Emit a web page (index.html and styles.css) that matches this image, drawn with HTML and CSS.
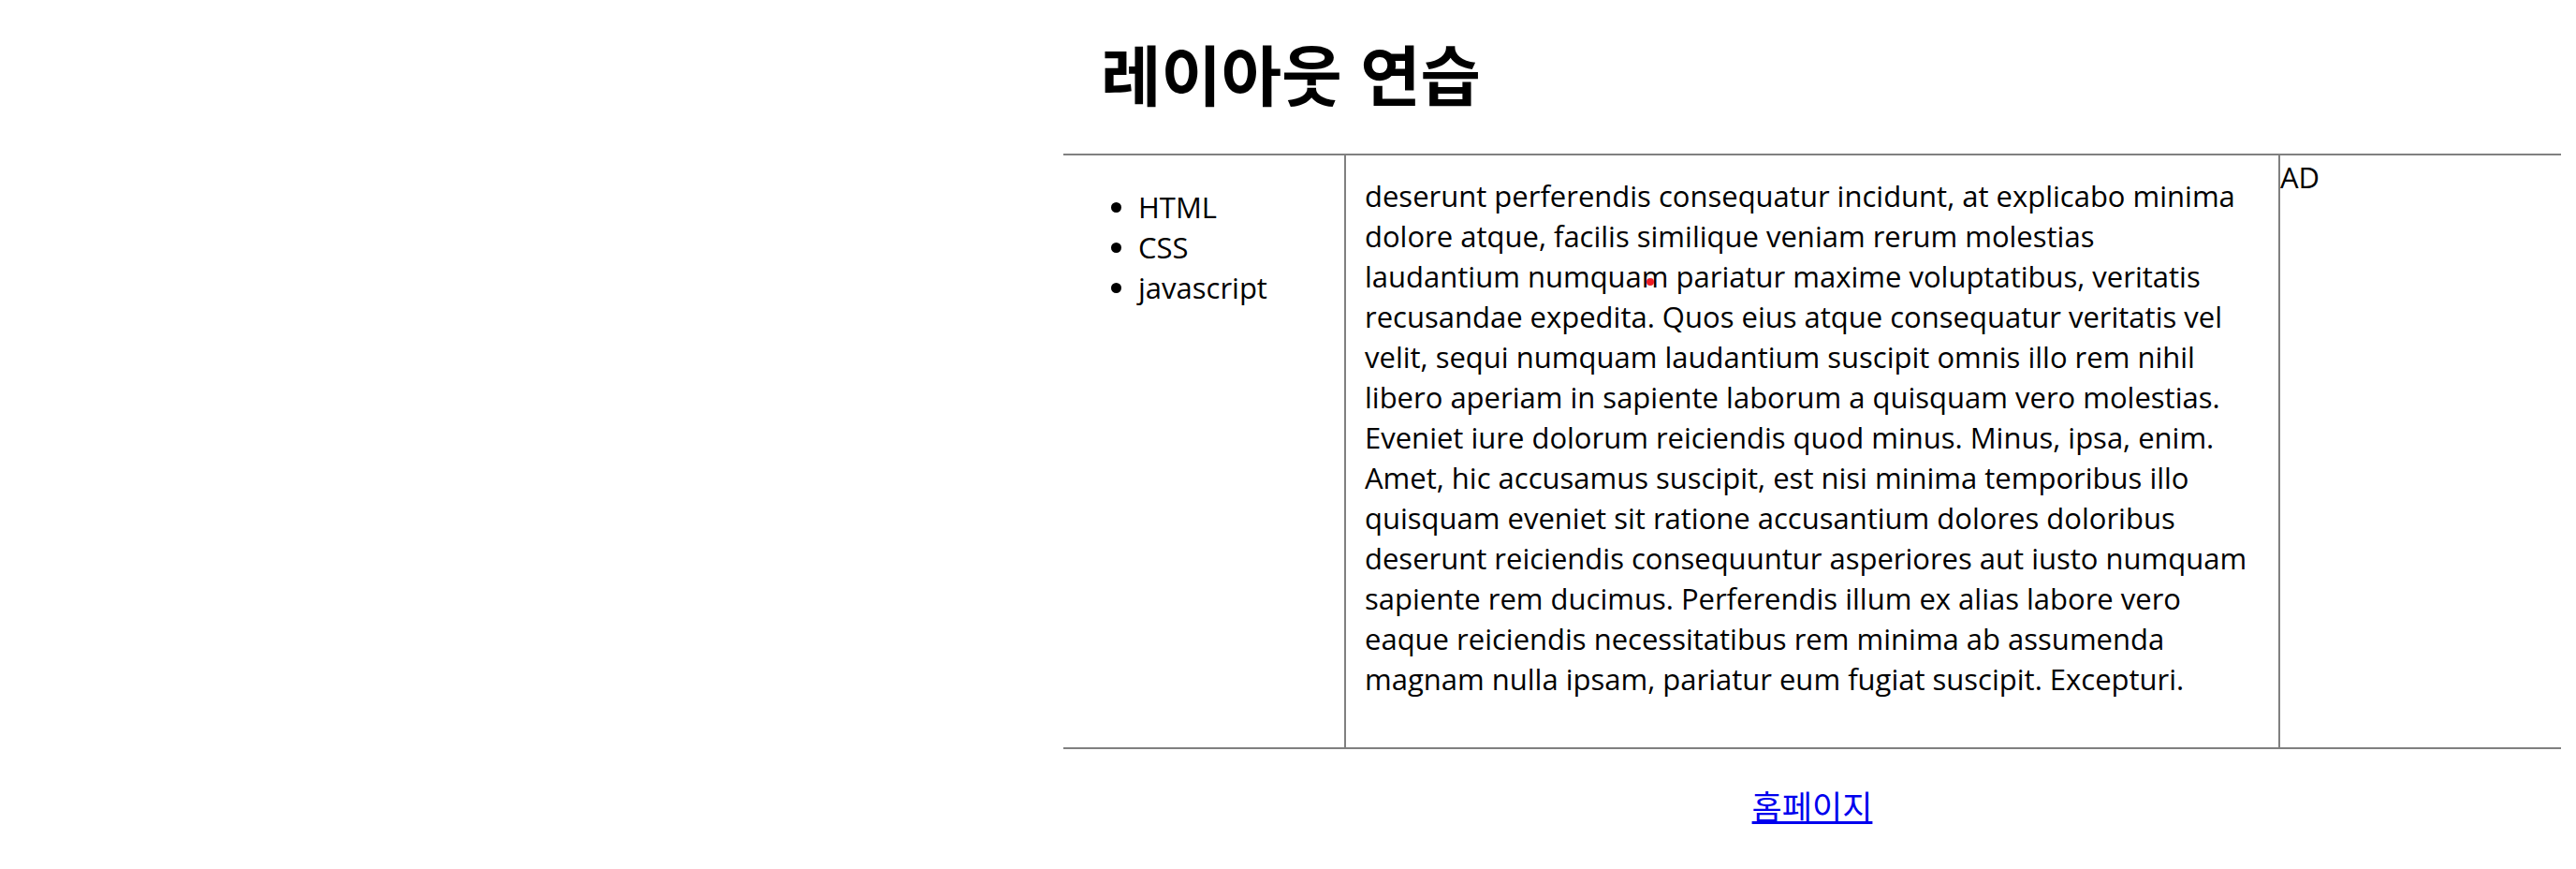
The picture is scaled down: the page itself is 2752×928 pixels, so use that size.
FILE: index.html
```
<!DOCTYPE html>
<html lang="ko">
<head>
<meta charset="utf-8">
<title>레이아웃 연습</title>
<link rel="stylesheet" href="styles.css">
</head>
<body>
<div class="page">
  <header class="header"><h1 class="title">레이아웃 연습</h1></header>
  <div class="columns">
    <nav class="nav">
      <ul class="menu">
        <li>HTML</li>
        <li>CSS</li>
        <li>javascript</li>
      </ul>
    </nav>
    <main class="article">
      <p class="text">deserunt perferendis consequatur incidunt, at explicabo minima<br>
      dolore atque, facilis similique veniam rerum molestias<br>
      laudantium <span class="marked">numquam<span class="dot"></span></span> pariatur maxime voluptatibus, veritatis<br>
      recusandae expedita. Quos eius atque consequatur veritatis vel<br>
      velit, sequi numquam laudantium suscipit omnis illo rem nihil<br>
      libero aperiam in sapiente laborum a quisquam vero molestias.<br>
      Eveniet iure dolorum reiciendis quod minus. Minus, ipsa, enim.<br>
      Amet, hic accusamus suscipit, est nisi minima temporibus illo<br>
      quisquam eveniet sit ratione accusantium dolores doloribus<br>
      deserunt reiciendis consequuntur asperiores aut iusto numquam<br>
      sapiente rem ducimus. Perferendis illum ex alias labore vero<br>
      eaque reiciendis necessitatibus rem minima ab assumenda<br>
      magnam nulla ipsam, pariatur eum fugiat suscipit. Excepturi.</p>
    </main>
    <aside class="aside">AD</aside>
  </div>
  <footer class="footer"><a class="home" href="#">홈페이지</a></footer>
</div>
</body>
</html>
```
FILE: styles.css
```
* { box-sizing: border-box; }
body {
  margin: 0 16px;
  background: #fff;
  color: #000;
  font: 400 31px/43px "Open Sans", "Noto Sans CJK KR", sans-serif;
}
.page { max-width: 1600px; margin-left: auto; }
.header { padding: 28px 40px 36px; border-bottom: 2px solid #808080; }
.title { margin: 0; font: 700 70px/100px "Noto Sans CJK KR", sans-serif; }
.columns { display: grid; grid-template-columns: 302px 1fr 300px; border-bottom: 2px solid #808080; }
.nav { padding: 34px 20px; border-right: 2px solid #808080; }
.menu { margin: 0; padding-left: 60px; }
.article { padding: 22px 0 51px 20px; border-right: 2px solid #808080; }
.aside { padding-top: 2px; }
.text { margin: 0; white-space: nowrap; }
.marked { position: relative; }
.dot {
  position: absolute;
  right: 16px;
  bottom: 11px;
  width: 8px;
  height: 8px;
  border-radius: 50%;
  background: #ed1c24;
}
.footer { padding: 38px 20px; text-align: center; }
.home {
  color: #00e;
  font-family: "Noto Sans CJK KR", sans-serif;
  font-size: 35px;
  text-decoration: underline;
  text-decoration-thickness: 3px;
}
```
